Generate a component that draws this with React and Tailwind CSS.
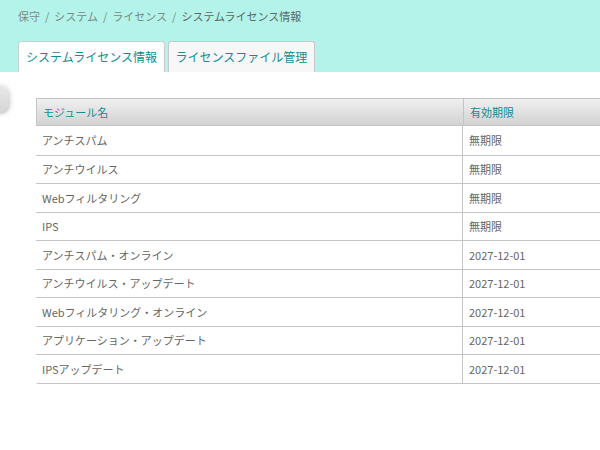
const rows = [
  ['アンチスパム', '無期限'],
  ['アンチウイルス', '無期限'],
  ['Webフィルタリング', '無期限'],
  ['IPS', '無期限'],
  ['アンチスパム・オンライン', '2027-12-01'],
  ['アンチウイルス・アップデート', '2027-12-01'],
  ['Webフィルタリング・オンライン', '2027-12-01'],
  ['アプリケーション・アップデート', '2027-12-01'],
  ['IPSアップデート', '2027-12-01'],
];

const crumbs = ['保守', 'システム', 'ライセンス'];

const font = { fontFamily: '"Noto Sans CJK JP", "Liberation Sans", sans-serif' };

export default function App() {
  return (
    <div className="w-[600px] h-[450px] bg-white overflow-hidden relative text-[11px]" style={font}>
      {/* header band */}
      <div className="h-[72px] bg-[#b3f3e9] pl-[18px] flex flex-col">
        <div className="pt-[8px] h-[34px] text-[#7a8a87] leading-[16px] flex">
          {crumbs.map((c) => (
            <span key={c} className="flex">
              <span>{c}</span>
              <span className="mx-[5px]">/</span>
            </span>
          ))}
          <span className="text-[#5a6866]">システムライセンス情報</span>
        </div>
        <div className="flex gap-[3px] items-end h-[38px]">
          <div className="w-[147px] h-[31px] bg-white rounded-t-[3px] border-t border-l border-r border-[#c8d0ce] flex items-center justify-center text-[12px] text-[#138d92]">
            システムライセンス情報
          </div>
          <div className="w-[147px] h-[31px] bg-[#f7f7f7] rounded-t-[3px] border-t border-l border-r border-[#c8c8c8] flex items-center justify-center text-[12px] text-[#138d92]">
            ライセンスファイル管理
          </div>
        </div>
      </div>

      {/* side handle */}
      <div className="absolute left-[-16px] top-[86px] w-[26px] h-[28px] rounded-[9px] bg-gradient-to-b from-[#e8e8e8] to-[#d4d4d4] shadow-[0_0_5px_rgba(0,0,0,0.18)]" />

      {/* table */}
      <div className="pl-[36px] pt-[26px]">
        <div className="w-[600px] border-b border-[#c4c4c4] rounded-bl-[2px]">
          <div className="flex h-[28px] border-t border-b border-l border-[#c4c4c4] bg-gradient-to-b from-[#f0f0f0] to-[#d2d2d2] text-[#138d92]">
            <div className="w-[426px] pl-[6px] flex items-center">モジュール名</div>
            <div className="flex-1 pl-[6px] flex items-center border-l border-[#c4c4c4]">有効期限</div>
          </div>
          {rows.map((r, i) => (
            <div key={i} className={`flex h-[28.5px] text-[#666666] ${i > 0 ? 'border-t border-[#c4c4c4]' : ''}`}>
              <div className="w-[426px] pl-[6px] flex items-center">{r[0]}</div>
              <div className="flex-1 pl-[6px] flex items-center border-l border-[#c4c4c4]">{r[1]}</div>
            </div>
          ))}
        </div>
      </div>
    </div>
  );
}
